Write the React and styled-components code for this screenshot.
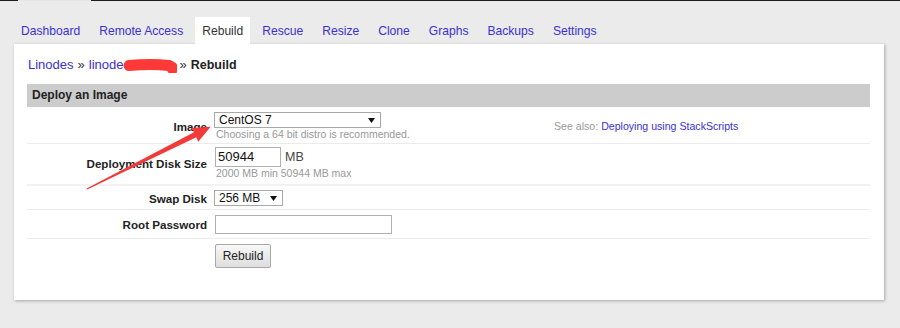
import React from 'react'
import styled, { createGlobalStyle } from 'styled-components'

const GlobalStyle = createGlobalStyle`
  html, body {
    margin: 0;
    padding: 0;
    background: #ebebeb;
  }
  body {
    font-family: "Liberation Sans", Arial, sans-serif;
    color: #222;
  }
`

const Page = styled.div`
  position: relative;
  width: 900px;
  height: 328px;
  overflow: hidden;
`

const TopEdge = styled.div`
  display: flex;
  height: 1px;
`

const EdgePart = styled.div`
  width: ${({ w }) => (w ? `${w}px` : 'auto')};
  flex: ${({ w }) => (w ? 'none' : '1')};
  background: ${({ dark }) => (dark ? '#1c1c1c' : '#e6e6e6')};
`

const Tabs = styled.nav`
  display: flex;
  margin: 16px 0 0 14px;
  height: 27px;
`

const Tab = styled.a`
  display: block;
  padding: 2px 7px 0;
  margin-right: 5px;
  line-height: 25px;
  font-size: 12.1px;
  text-decoration: none;
  color: ${({ active }) => (active ? '#333' : '#3a30d2')};
  background: ${({ active }) => (active ? '#fff' : 'transparent')};
`

const Panel = styled.div`
  width: 870px;
  margin-left: 14px;
  background: #fff;
  box-shadow: 1px 1px 3px rgba(0, 0, 0, 0.3);
  padding: 13px 14px 32px 13px;
  box-sizing: border-box;
`

const Breadcrumb = styled.div`
  display: flex;
  align-items: center;
  font-size: 13px;
  line-height: 16px;
  margin-left: 1px;
  margin-bottom: 11px;
  color: #333;
`

const Crumb = styled.a`
  color: #3a30d2;
  text-decoration: none;
`

const Sep = styled.span`
  color: #333;
  margin: 0 4px;
`

const Redacted = styled.span`
  display: inline-block;
  width: 54px;
  height: 16px;
  margin-right: -2px;
`

const Current = styled.strong`
  color: #222;
  font-size: 12.5px;
`

const SectionHeader = styled.div`
  background: #cccccc;
  height: 23px;
  line-height: 23px;
  padding: 0 5px;
  font-size: 12px;
  font-weight: bold;
  color: #222;
`

const Row = styled.div`
  display: grid;
  grid-template-columns: 180px 333px 1fr;
  column-gap: 7px;
  align-items: center;
  padding: ${({ pad }) => pad || '4px 0 4px'};
  border-bottom: ${({ last, thick }) =>
    last ? 'none' : thick ? '2px solid #f2f2f2' : '1px solid #ebebeb'};
`

const Label = styled.div`
  text-align: right;
  font-size: 11.6px;
  font-weight: bold;
  color: #222;
`

const Control = styled.div`
  display: flex;
  flex-direction: column;
  align-items: flex-start;
`

const Inline = styled.div`
  display: flex;
  align-items: center;
  gap: 4px;
  font-size: 12.5px;
  color: #444;
`

const Select = styled.div`
  display: flex;
  align-items: center;
  justify-content: space-between;
  box-sizing: border-box;
  width: ${({ w }) => w}px;
  height: 16px;
  padding: 0 5px 0 4px;
  border: 1px solid #a9a9a9;
  background: #fff;
  font-size: 12px;
  color: #111;
`

const TextInput = styled.div`
  box-sizing: border-box;
  width: ${({ w }) => w}px;
  height: ${({ h }) => h || 20}px;
  margin-left: 1px;
  padding: 0 2px;
  border: 1px solid #b0b0b0;
  font-size: 13px;
  line-height: 18px;
  color: #111;
`

const Hint = styled.div`
  font-size: 10.5px;
  line-height: 12px;
  margin: 0 0 0 2px;
  color: #999;
`

const SeeAlso = styled.div`
  font-size: 10.6px;
  color: #999;
`

const Button = styled.button`
  margin-left: 1px;
  width: 56px;
  height: 24px;
  padding: 0;
  border: 1px solid #a8a8a8;
  border-radius: 2px;
  background: linear-gradient(#f8f8f8, #dedede);
  font-family: inherit;
  font-size: 12px;
  color: #222;
`

const Overlay = styled.svg`
  position: absolute;
  left: 0;
  top: 0;
  pointer-events: none;
`

const Caret = () => (
  <svg width='7' height='5' viewBox='0 0 7 5'>
    <path d='M0 0 H7 L3.5 5 Z' fill='#111' />
  </svg>
)

const tabs = [
  'Dashboard',
  'Remote Access',
  'Rebuild',
  'Rescue',
  'Resize',
  'Clone',
  'Graphs',
  'Backups',
  'Settings'
]

const App = () => {
  return (
    <>
      <GlobalStyle />
      <Page>
        <TopEdge>
          <EdgePart dark w={18} />
          <EdgePart w={73} />
          <EdgePart dark />
        </TopEdge>
        <Tabs>
          {tabs.map(t => (
            <Tab key={t} active={t === 'Rebuild'}>
              {t}
            </Tab>
          ))}
        </Tabs>
        <Panel>
          <Breadcrumb>
            <Crumb>Linodes</Crumb>
            <Sep>»</Sep>
            <Crumb>linode</Crumb>
            <Redacted>
              <svg width='54' height='16' viewBox='0 0 54 16'>
                <path
                  d='M6 8.5 C 18 7.5, 36 7.5, 46 8.5 C 49 9.5, 50 11, 49.5 12'
                  stroke='#ff3838'
                  strokeWidth='11'
                  strokeLinecap='round'
                  strokeLinejoin='round'
                  fill='none'
                />
              </svg>
            </Redacted>
            <Sep>»</Sep>
            <Current>Rebuild</Current>
          </Breadcrumb>
          <SectionHeader>Deploy an Image</SectionHeader>
          <Row pad='5px 0 3px'>
            <Label>Image</Label>
            <Control>
              <Select w={167}>
                CentOS 7
                <Caret />
              </Select>
              <Hint>Choosing a 64 bit distro is recommended.</Hint>
            </Control>
            <SeeAlso>
              See also: <Crumb>Deploying using StackScripts</Crumb>
            </SeeAlso>
          </Row>
          <Row thick pad='3px 0 5px'>
            <Label>Deployment Disk Size</Label>
            <Control>
              <Inline>
                <TextInput w={66}>50944</TextInput>
                MB
              </Inline>
              <Hint>2000 MB min 50944 MB max</Hint>
            </Control>
          </Row>
          <Row pad='4px 0 3px'>
            <Label>Swap Disk</Label>
            <Control>
              <Select w={69}>
                256 MB
                <Caret />
              </Select>
            </Control>
          </Row>
          <Row pad='5px 0 4px'>
            <Label>Root Password</Label>
            <Control>
              <TextInput w={177} h={19} />
            </Control>
          </Row>
          <Row last pad='5px 0 0'>
            <div />
            <Control>
              <Button>Rebuild</Button>
            </Control>
          </Row>
        </Panel>
        <Overlay width='900' height='328' viewBox='0 0 900 328'>
          <polygon
            points='86.6,188.4 194,132.3 191,127.9 210.7,126.7 198.2,141.7 196.3,137.3 87.2,189.6'
            fill='#f23a3a'
          />
        </Overlay>
      </Page>
    </>
  )
}

export default App
